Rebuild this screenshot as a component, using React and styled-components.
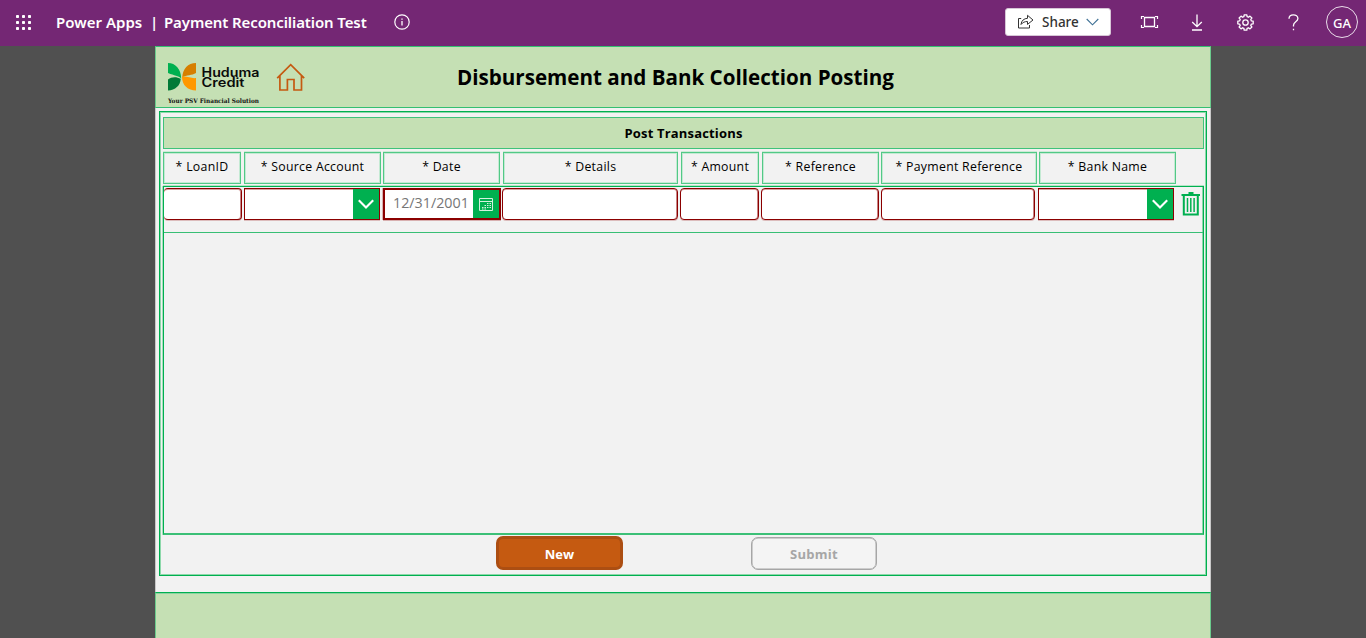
import React from "react";
import styled, { createGlobalStyle, css } from "styled-components";

const GREEN = "#00b050";
const PALE = "#c5e0b4";
const MAROON = "#8b0000";

const GlobalStyle = createGlobalStyle`
  * { box-sizing: border-box; }
  body { margin: 0; overflow: hidden; background: #505050; font-family: "Open Sans", sans-serif; }
  svg { display: block; flex: none; overflow: visible; }
  button, input { font-family: inherit; }
`;

const Shell = styled.div`
  height: 638px;
  display: flex;
  flex-direction: column;
  background: #505050;
`;

const TopBar = styled.header`
  height: 46px;
  flex: none;
  display: flex;
  align-items: center;
  padding: 0 8px 2px 15px;
  background: #742774;
  color: #fff;
`;

const Brand = styled.div`
  display: flex;
  align-items: center;
  margin-left: 24px;
  font: 600 15px/20px "Noto Sans", sans-serif;
  white-space: pre;
`;

const BrandPart = styled.span`
  width: ${(p) => p.$w}px;
  letter-spacing: ${(p) => p.$ls || 0}px;
`;

const InfoWrap = styled.div`
  margin-left: 27px;
`;

const ShareButton = styled.button`
  width: 106px;
  height: 28px;
  margin: 0 14px 0 auto;
  padding: 0 12px 0 11px;
  display: flex;
  align-items: center;
  border: 1px solid #d6c6d6;
  border-radius: 3px;
  background: #fff;
  color: #333;
  font: 500 13.5px "Noto Sans", sans-serif;
`;

const ShareText = styled.span`
  width: 37px;
  margin: 0 7px 0 8px;
`;

const ToolIcons = styled.div`
  display: flex;
  align-items: center;
`;

const IconSlot = styled.div`
  width: 48px;
  display: flex;
  justify-content: center;
`;

const Avatar = styled.div`
  width: 32px;
  height: 32px;
  margin-left: 9px;
  border: 1px solid #eadcea;
  border-radius: 50%;
  text-align: center;
  font: 500 13px/33px "Noto Sans", sans-serif;
`;

const AppFrame = styled.main`
  width: 1056px;
  height: 592px;
  margin-left: 155px;
  display: flex;
  flex-direction: column;
  background: #f2f2f2;
  border-right: 1px solid #c8c8c8;
  border-left: 1px solid #c8c8c8;
`;

const AppHeader = styled.div`
  height: 62px;
  width: 1056px;
  margin-left: -1px;
  flex: none;
  display: flex;
  padding-left: 11px;
  background: ${PALE};
  border: 1px solid #33bf72;
  border-left-color: #6bcb8c;
  border-right-color: #6bcb8c;
`;

const LogoWrap = styled.div`
  margin-top: 15px;
`;

const HomeButton = styled.div`
  margin: 16px 0 0 15px;
`;

const PageTitle = styled.h1`
  width: 440px;
  margin: 15px 0 0 151px;
  font-size: 20.6px;
  line-height: 30px;
  font-weight: 700;
  color: #000;
  white-space: nowrap;
`;

const Panel = styled.section`
  width: 1048px;
  height: 465px;
  margin: 3px 0 0 3px;
  padding: 4px 2px 0 3px;
  flex: none;
  border: 1px solid ${GREEN};
  box-shadow: inset 0 0 0 1px #8dd8aa;
`;

const SectionTitle = styled.h2`
  height: 32px;
  width: 1041px;
  margin: 1px 0 0 0;
  border: 1px solid #3fc27a;
  background: ${PALE};
  color: #000;
  text-align: center;
  font-size: 13px;
  line-height: 31px;
  font-weight: 700;
  letter-spacing: 0.17px;
`;

const HeaderRow = styled.div`
  display: flex;
  height: 32px;
  margin-top: 3px;
`;

const HeaderCell = styled.div`
  width: ${(p) => p.$w}px;
  margin-right: ${(p) => p.$gap}px;
  flex: none;
  border: 1px solid #52c987;
  box-shadow: inset 0 0 0 1px #c4ead3, 0 -1px #cdebd8;
  text-align: center;
  color: #000;
  font-size: 12.3px;
  line-height: 28px;
  letter-spacing: 0.28px;
  white-space: nowrap;
`;

const Gallery = styled.div`
  width: 1041px;
  height: 349px;
  margin: 2px 0 0 0;
  border: 1px solid ${GREEN};
  border-bottom: 2px solid #3cc077;
  box-shadow: 0 -1px #b5e4c7, inset -1px 0 #8dd8aa, -1px 0 #a8dfbd;
`;

const EntryRow = styled.div`
  height: 46px;
  display: flex;
  padding-top: 1px;
  border-bottom: 1px solid #38bf75;
`;

const Field = styled.div`
  width: ${(p) => p.$w}px;
  height: 32px;
  margin-right: ${(p) => p.$gap}px;
  flex: none;
  display: flex;
  background: #fff;
  border: 1px solid ${MAROON};
  ${(p) =>
    p.$kind === "text" &&
    css`
      border-radius: 4px;
      box-shadow: inset 0 1px #d6a0a0, inset -1px 0 #c88484, 0 1px #dcbcbc;
    `}
  ${(p) =>
    p.$kind === "select" &&
    css`
      box-shadow: inset 0 1px #d6a0a0, inset -1px 0 #c88484, 0 1px #dcbcbc;
    `}
  ${(p) =>
    p.$kind === "date" &&
    css`
      border-width: 2px;
      box-shadow: 0 1px #d8b0b0, -1px 0 #d8b0b0;
    `}
  ${(p) => p.$first && css`border-left-width: 0;`}
`;

const DateValue = styled.span`
  flex: 1;
  padding-left: 8px;
  font-size: 14.3px;
  line-height: 25px;
  color: #767676;
  white-space: nowrap;
`;

const FieldButton = styled.div`
  width: 26px;
  margin-left: auto;
  display: flex;
  align-items: center;
  justify-content: center;
  background: ${GREEN};
`;

const TrashWrap = styled.div`
  margin: 3px 0 0 7px;
`;

const ButtonRow = styled.div`
  display: flex;
  height: 38px;
  padding: 1px 0 0 333px;
`;

const NewButton = styled.button`
  width: 127px;
  height: 34px;
  padding: 1px 0 0;
  border: 3px solid #ac4e12;
  border-radius: 7px;
  background: #c55a11;
  color: #fff;
  font-size: 13px;
  font-weight: 700;
  line-height: 28px;
`;

const SubmitButton = styled.button`
  width: 126px;
  height: 33px;
  margin: 1px 0 0 128px;
  padding: 0;
  border: 1.5px solid #a6a6a6;
  border-radius: 7px;
  box-shadow: inset 0 0 0 0.5px #a6a6a6;
  background: #f4f4f4;
  color: #a6a6a6;
  font-size: 13px;
  font-weight: 700;
  letter-spacing: 0.25px;
`;

const Footer = styled.footer`
  width: 1056px;
  height: 50px;
  margin: 16px 0 0 -1px;
  flex: none;
  background: ${PALE};
  border: 1px solid #6bcb8c;
  border-top-color: ${GREEN};
  box-shadow: inset 0 1px #8ad3a0;
`;

const columns = [
  { label: "* LoanID", w: 78, gap: 3, fw: 78, fgap: 2, kind: "text" },
  { label: "* Source Account", w: 137, gap: 2, fw: 136, fgap: 3, kind: "select" },
  { label: "* Date", w: 117, gap: 3, fw: 118, fgap: 1, kind: "date" },
  { label: "* Details", w: 175, gap: 3, fw: 176, fgap: 2, kind: "text" },
  { label: "* Amount", w: 78, gap: 3, fw: 79, fgap: 2, kind: "text" },
  { label: "* Reference", w: 117, gap: 2, fw: 118, fgap: 2, kind: "text" },
  { label: "* Payment Reference", w: 156, gap: 2, fw: 154, fgap: 3, kind: "text" },
  { label: "* Bank Name", w: 137, gap: 0, fw: 136, fgap: 0, kind: "select" },
];

const Waffle = () => (
  <svg width="17" height="16" viewBox="0 0 17 16" fill="#fff">
    {[1, 7, 13].map((y) =>
      [1, 7, 13].map((x) => <rect key={`${x}-${y}`} x={x} y={y} width="3" height="3" rx=".8" />)
    )}
  </svg>
);

const InfoIcon = () => (
  <svg width="16" height="16" viewBox="0 0 16 16" fill="none" stroke="#fff">
    <circle cx="8" cy="8" r="7.2" strokeWidth="1.2" />
    <path d="M8 7v4.5M8 4.4v1.3" strokeWidth="1.3" />
  </svg>
);

const ShareIcon = () => (
  <svg width="17" height="16" viewBox="0 0 17 16" fill="none" stroke="#333" strokeLinejoin="round">
    <path d="M4.2 4.5H1.5v9.5h11v-3" />
    <path d="M4 10.5C4.4 6.500 7 4.500 10.500 4.300V1.300L16 6l-5.500 4.400V7.500C7.800 7.500 5.800 8.300 4 10.500z" />
  </svg>
);

const ChevronIcon = () => (
  <svg width="13" height="8" viewBox="0 0 13 8" fill="none" stroke="#3f7195" strokeWidth="1.1">
    <path d="M.7 1l5.8 5.8L12.3 1" />
  </svg>
);

const FitIcon = () => (
  <svg width="17" height="14" viewBox="0 0 17 14" fill="none" stroke="#fff">
    <path d="M3.5 2.5h10v9h-10z" strokeWidth="1.3" />
    <path d="M.5 4V1.500H3M14 1.500h2.500V4M16.500 10v2.500H14M3 12.500H.5V10" strokeWidth="1.2" />
  </svg>
);

const DownloadIcon = () => (
  <svg width="12" height="17" viewBox="0 0 12 17" fill="none" stroke="#fff" strokeWidth="1.3">
    <path d="M6 .5v12M1.200 8L6 12.700 10.800 8M1 16h10" />
  </svg>
);

const gearPath = Array.from({ length: 8 }, (_, i) => {
  const point = (r, deg) => {
    const a = ((i * 45 + deg) * Math.PI) / 180;
    return `${(8.5 + r * Math.sin(a)).toFixed(2)} ${(8.5 - r * Math.cos(a)).toFixed(2)}`;
  };
  return `${i ? "L" : "M"}${point(7.8, -10)}L${point(7.8, 10)}L${point(6.1, 15)}L${point(6.1, 30)}`;
}).join("") + "Z";

const GearIcon = () => (
  <svg width="17" height="17" viewBox="0 0 17 17" fill="none" stroke="#fff" strokeWidth="1.3" strokeLinejoin="round">
    <path d={gearPath} />
    <circle cx="8.5" cy="8.5" r="2.7" />
  </svg>
);

const HelpIcon = () => (
  <svg width="11" height="17" viewBox="0 0 11 17" fill="none" stroke="#fff" strokeWidth="1.3">
    <path d="M1 4.800C1 2 2.800.8 5.300.8S9.900 2.300 9.900 4.500C9.900 7.800 5.500 7.800 5.500 11.200v1.300M5.500 14.800v1.500" />
  </svg>
);

const Logo = () => (
  <svg width="94" height="44" viewBox="0 0 94 44">
    <path d="M1 1c7.500 0 13 6 13.200 15.500C11.500 13.500 7.500 13.800 1 11z" fill="#00b050" />
    <path d="M1 28.500V17.500C4.500 14.700 9.500 14.500 13.700 16.800 13.500 23.500 8 28.500 1 28.500z" fill="#007a37" />
    <path d="M29 1v10c-4 2.800-9.500 1.500-13.700 4.500C15.500 7 21 1 29 1z" fill="#d67f00" />
    <path d="M15 14.800c4.500-1 9.500 2 14 1.200v12.500c-8 0-14-5-14-13.700z" fill="#ff9800" />
    <g fill="#0b0b0b" fontFamily="Inter, sans-serif" fontWeight="600" fontSize="12.500">
      <text x="34.500" y="14.500" textLength="58" lengthAdjust="spacingAndGlyphs">Huduma</text>
      <text x="34.500" y="25" textLength="43" lengthAdjust="spacingAndGlyphs">Credit</text>
    </g>
    <text x="1" y="41" fontFamily="DejaVu Serif, serif" fontWeight="700" fontSize="6.200" fill="#111" textLength="91" lengthAdjust="spacingAndGlyphs">
      Your PSV Financial Solution
    </text>
  </svg>
);

const HomeIcon = () => (
  <svg width="30" height="29" viewBox="0 0 30 29" fill="none" stroke="#c55a11" strokeWidth="1.7">
    <path d="M1.200 15.200L14.700 1.700l13.500 13.500M3.900 13v14h7.500V16.500h6.600V27h7.500V13" />
  </svg>
);

const SelectChevron = () => (
  <svg width="18" height="12" viewBox="0 0 18 12" fill="none" stroke="#fff" strokeWidth="2.1">
    <path d="M1.800 2.300L9 9.500 16.200 2.300" />
  </svg>
);

const CalendarIcon = () => (
  <svg width="14" height="13" viewBox="0 0 14 13" fill="none" stroke="#d5f2df">
    <path d="M.5.5h13v12H.5zM.5 3.500h13" />
    <path d="M8 5.500h1.500M10.500 5.500H12M5.500 7.500H7M8 7.500h1.500M10.500 7.500H12M3 9.500h1.500M5.500 9.500H7M8 9.500h1.500M10.500 9.500H12M3 11h1.500M5.500 11H7" />
  </svg>
);

const TrashIcon = () => (
  <svg width="20" height="26" viewBox="0 0 20 26" fill="none" stroke={GREEN}>
    <path d="M.5 4H19" strokeWidth="2" />
    <path d="M7.500 2h5" strokeWidth="2" />
    <path d="M2.800 4v19.500h14V4" strokeWidth="2" />
    <path d="M6.500 7v14M9.800 7v14M13.100 7v14" strokeWidth="1.500" />
  </svg>
);

export default function App() {
  return (
    <Shell>
      <GlobalStyle />
      <TopBar>
        <Waffle />
        <Brand>
          <BrandPart $w={94} $ls={0.02}>Power Apps</BrandPart>
          <BrandPart $w={14}>|</BrandPart>
          <BrandPart $w={203} $ls={-0.11}>Payment Reconciliation Test</BrandPart>
        </Brand>
        <InfoWrap><InfoIcon /></InfoWrap>
        <ShareButton>
          <ShareIcon />
          <ShareText>Share</ShareText>
          <ChevronIcon />
        </ShareButton>
        <ToolIcons>
          <IconSlot><FitIcon /></IconSlot>
          <IconSlot><DownloadIcon /></IconSlot>
          <IconSlot><GearIcon /></IconSlot>
          <IconSlot><HelpIcon /></IconSlot>
        </ToolIcons>
        <Avatar>GA</Avatar>
      </TopBar>
      <AppFrame>
        <AppHeader>
          <LogoWrap><Logo /></LogoWrap>
          <HomeButton><HomeIcon /></HomeButton>
          <PageTitle>Disbursement and Bank Collection Posting</PageTitle>
        </AppHeader>
        <Panel>
          <SectionTitle>Post Transactions</SectionTitle>
          <HeaderRow>
            {columns.map((c) => (
              <HeaderCell key={c.label} $w={c.w} $gap={c.gap}>{c.label}</HeaderCell>
            ))}
          </HeaderRow>
          <Gallery>
            <EntryRow>
              {columns.map((c, i) => (
                <Field key={c.label} $w={c.fw} $gap={c.fgap} $kind={c.kind} $first={i === 0}>
                  {c.kind === "date" && <DateValue>12/31/2001</DateValue>}
                  {c.kind !== "text" && (
                    <FieldButton>{c.kind === "date" ? <CalendarIcon /> : <SelectChevron />}</FieldButton>
                  )}
                </Field>
              ))}
              <TrashWrap><TrashIcon /></TrashWrap>
            </EntryRow>
          </Gallery>
          <ButtonRow>
            <NewButton>New</NewButton>
            <SubmitButton disabled>Submit</SubmitButton>
          </ButtonRow>
        </Panel>
        <Footer />
      </AppFrame>
    </Shell>
  );
}
